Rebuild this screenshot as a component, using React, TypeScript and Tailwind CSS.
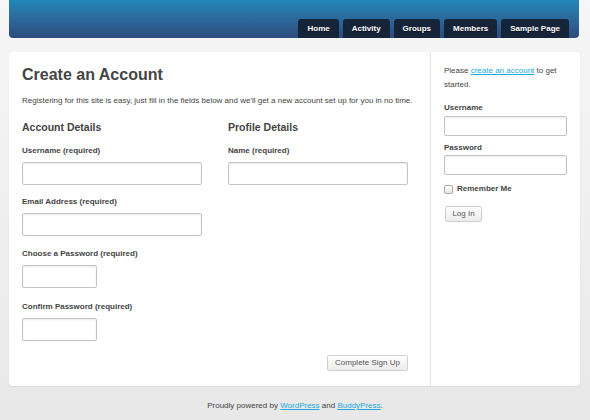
const navItems = ['Home', 'Activity', 'Groups', 'Members', 'Sample Page'];

const Field = ({
  label,
  wide = true,
  className = 'mt-[11px]',
}: {
  label: string;
  wide?: boolean;
  className?: string;
}) => (
  <div className={`${className} flex flex-col`}>
    <label className="mb-[5px] text-[8px] font-bold leading-[12px] text-[#444]">
      {label}
    </label>
    <input
      type="text"
      className={`${wide ? 'w-[180px]' : 'w-[75px]'} h-[23px] rounded-[2px] border border-[#c4c4c4] bg-white shadow-[inset_0_1px_2px_rgba(0,0,0,0.08)] outline-none`}
    />
  </div>
);

const App = () => {
  return (
    <div
      className="flex h-[420px] w-[590px] flex-col bg-gradient-to-b from-[#f6f6f6] to-[#e8e8e8] px-[9px] text-[#444]"
      style={{ fontFamily: '"Liberation Sans", Arial, sans-serif' }}
    >
      <header className="flex h-[38px] w-[570px] items-end justify-end rounded-b-[4px] bg-gradient-to-b from-[#1f88b9] to-[#2d4b7d] pr-[10px]">
        <nav className="flex gap-[4px]">
          {navItems.map((item) => (
            <a
              key={item}
              className="flex h-[19px] items-center rounded-t-[3px] bg-[#16243a] px-[9px] text-[8px] font-bold text-white [text-shadow:0_1px_0_rgba(0,0,0,0.6)]"
            >
              {item}
            </a>
          ))}
        </nav>
      </header>

      <main className="mt-[14px] flex h-[334px] w-[571px] rounded-[4px] bg-white shadow-[0_1px_2px_rgba(0,0,0,0.06)]">
        <section className="flex w-[422px] flex-col border-r border-[#e6e6e6] px-[13px] pt-[12px]">
          <h1 className="text-[16px] font-bold leading-[22px] text-[#444]">
            Create an Account
          </h1>
          <p className="mt-[9px] text-[8px] leading-[12px] text-[#444]">
            Registering for this site is easy, just fill in the fields below and we'll get a new account set up for you in no time.
          </p>

          <div className="mt-[12px] flex">
            <div className="flex w-[206px] flex-col">
              <h2 className="text-[10.5px] font-bold leading-[16px] text-[#444]">
                Account Details
              </h2>
              <Field label="Username (required)" className="mt-[10px]" />
              <Field label="Email Address (required)" className="mt-[11px]" />
              <Field label="Choose a Password (required)" wide={false} className="mt-[12px]" />
              <Field label="Confirm Password (required)" wide={false} className="mt-[13px]" />
            </div>
            <div className="flex flex-col">
              <h2 className="text-[10.5px] font-bold leading-[16px] text-[#444]">
                Profile Details
              </h2>
              <Field label="Name (required)" className="mt-[10px]" />
            </div>
          </div>

          <div className="mt-[14px] flex w-[386px] justify-end">
            <button className="h-[16px] w-[81px] rounded-[2px] border border-[#cfcfcf] bg-gradient-to-b from-white to-[#ececec] text-[8px] text-[#555]">
              Complete Sign Up
            </button>
          </div>
        </section>

        <aside className="flex flex-1 flex-col px-[13px] pt-[12px]">
          <p className="text-[8px] leading-[14px] text-[#444]">
            Please{' '}
            <a className="text-[#21a9e1] underline">create an account</a> to get
            started.
          </p>
          <label className="mt-[10px] text-[8px] font-bold leading-[12px]">
            Username
          </label>
          <input
            type="text"
            className="mt-[2px] h-[20px] w-[123px] rounded-[2px] border border-[#c4c4c4] bg-white shadow-[inset_0_1px_2px_rgba(0,0,0,0.08)] outline-none"
          />
          <label className="mt-[6px] text-[8px] font-bold leading-[12px]">
            Password
          </label>
          <input
            type="password"
            className="mt-[1px] h-[20px] w-[123px] rounded-[2px] border border-[#c4c4c4] bg-white shadow-[inset_0_1px_2px_rgba(0,0,0,0.08)] outline-none"
          />
          <div className="mt-[8px] flex items-center gap-[4px]">
            <span className="h-[9px] w-[9px] rounded-[2px] border border-[#aaa] bg-gradient-to-b from-white to-[#e6e6e6]" />
            <span className="text-[8px] font-bold text-[#444]">Remember Me</span>
          </div>
          <button className="ml-[1px] mt-[11px] h-[16px] w-[37px] rounded-[2px] border border-[#cfcfcf] bg-gradient-to-b from-white to-[#ececec] text-[8px] text-[#555]">
            Log In
          </button>
        </aside>
      </main>

      <footer className="mt-[14px] text-center text-[8px] text-[#444]">
        Proudly powered by{' '}
        <a className="text-[#21a9e1] underline">WordPress</a> and{' '}
        <a className="text-[#21a9e1] underline">BuddyPress</a>.
      </footer>
    </div>
  );
};

export default App;
